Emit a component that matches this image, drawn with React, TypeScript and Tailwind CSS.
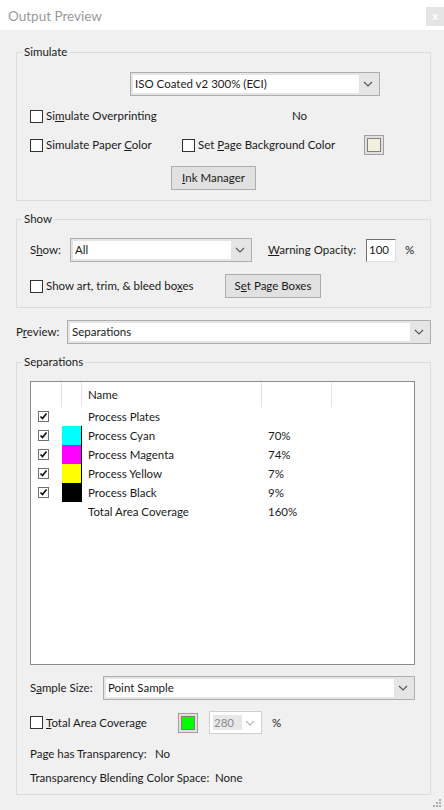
import React from "react";

const font = { fontFamily: 'Lato, "Noto Sans", sans-serif' };

function Chevron({ light }: { light?: boolean }) {
  return (
    <svg width="10" height="6" viewBox="0 0 10 6" className="block">
      <path d="M1 1 L5 5 L9 1" fill="none" stroke={light ? "#b8b8b8" : "#555"} strokeWidth="1.1" />
    </svg>
  );
}

function Select({ value, className }: { value: string; className: string }) {
  return (
    <div className={`flex h-[24px] border border-[#adadad] bg-[#e5e5e5] p-[2px] ${className}`}>
      <div className="flex flex-1 items-center bg-white pl-[2px] text-[#1a1a1a]">{value}</div>
      <div className="flex w-[18px] items-center justify-center">
        <Chevron />
      </div>
    </div>
  );
}

function Check({ className = "" }: { className?: string }) {
  return <div className={`h-[13px] w-[13px] shrink-0 border border-[#333] bg-white ${className}`} />;
}

function SmallCheck() {
  return (
    <div className="flex h-[11px] w-[11px] items-center justify-center border border-[#707070] bg-white">
      <svg width="9" height="9" viewBox="0 0 9 9">
        <path d="M1.5 4.5 L3.5 6.5 L7.5 1.5" fill="none" stroke="#111" strokeWidth="1.7" />
      </svg>
    </div>
  );
}

function Button({ children, className }: { children: React.ReactNode; className: string }) {
  return (
    <div className={`flex h-[24px] items-center justify-center border border-[#adadad] bg-[#e1e1e1] text-[#1a1a1a] ${className}`}>
      {children}
    </div>
  );
}

function Swatch({ color }: { color: string }) {
  return (
    <div className="flex h-[20px] w-[20px] shrink-0 items-center justify-center border border-[#a0a0a0] bg-[#e0e0e0]">
      <div className="h-[14px] w-[14px] border border-[#808080]" style={{ background: color }} />
    </div>
  );
}

const rows = [
  { name: "Process Plates", pct: "", color: "" },
  { name: "Process Cyan", pct: "70%", color: "bg-[#00ffff]" },
  { name: "Process Magenta", pct: "74%", color: "bg-[#ff00ff]" },
  { name: "Process Yellow", pct: "7%", color: "bg-[#ffff00]" },
  { name: "Process Black", pct: "9%", color: "bg-black" },
  { name: "Total Area Coverage", pct: "160%", color: "", noCheck: true },
];

export default function App() {
  return (
    <div className="flex h-[810px] w-[444px] flex-col overflow-hidden whitespace-nowrap bg-[#f0f0f0] text-[11.5px] text-[#1a1a1a]" style={font}>
      <div className="flex h-[30px] shrink-0 items-start justify-between bg-white">
        <div className="mt-[6px] pl-[8px] text-[13.5px] text-[#999]">Output Preview</div>
        <div className="mt-[7px] flex h-[19px] w-[18px] items-center justify-center bg-[#e5e5e5] text-[11px] font-bold text-white">x</div>
      </div>

      <div className="flex flex-col pl-[16px] pr-[13px]">
        {/* Simulate */}
        <fieldset className="mt-[14px] flex flex-col border border-[#dcdcdc] pb-[10px] pl-[13px] pr-[13px]">
          <legend className="-ml-[8px] px-[2px] leading-[16px]">Simulate</legend>
          <Select value="ISO Coated v2 300% (ECI)" className="ml-[100px] mt-[12px] w-[250px]" />
          <div className="mt-[10px] flex h-[20px] items-center">
            <Check />
            <span className="ml-[3px] w-[246px]">
              Si<u>m</u>ulate Overprinting
            </span>
            <span>No</span>
          </div>
          <div className="mt-[9px] flex h-[20px] items-center">
            <Check />
            <span className="ml-[3px] w-[136px]">
              Simulate Paper <u>C</u>olor
            </span>
            <Check />
            <span className="ml-[3px] w-[166px]">
              Set <u>P</u>age Background Color
            </span>
            <Swatch color="#f0f0dc" />
          </div>
          <Button className="ml-[141px] mt-[11px] w-[85px]">
            <span>
              <u>I</u>nk Manager
            </span>
          </Button>
        </fieldset>

        {/* Show */}
        <fieldset className="mt-[10px] flex flex-col border border-[#dcdcdc] pb-[9px] pl-[13px] pr-[13px]">
          <legend className="-ml-[8px] px-[2px] leading-[16px]">Show</legend>
          <div className="mt-[11px] flex h-[24px] items-center">
            <span className="w-[40px]">
              S<u>h</u>ow:
            </span>
            <Select value="All" className="w-[182px]" />
            <span className="ml-[16px] w-[98px]">
              <u>W</u>arning Opacity:
            </span>
            <div className="flex h-[23px] w-[30px] items-center border border-[#e0e0e0] border-l-[#707070] border-t-[#707070] bg-white pl-[2px]">
              100
            </div>
            <span className="ml-[9px]">%</span>
          </div>
          <div className="mt-[12px] flex h-[24px] items-center">
            <Check />
            <span className="ml-[3px] w-[179px]">
              Show art, trim, &amp; bleed bo<u>x</u>es
            </span>
            <Button className="w-[96px]">
              <span>
                S<u>e</u>t Page Boxes
              </span>
            </Button>
          </div>
        </fieldset>

        {/* Preview */}
        <div className="mt-[12px] flex h-[24px] items-center">
          <span className="w-[51px]">
            P<u>r</u>eview:
          </span>
          <Select value="Separations" className="flex-1" />
        </div>

        {/* Separations */}
        <fieldset className="mt-[10px] flex flex-col border border-[#dcdcdc] pb-[8px] pl-[13px] pr-[15px]">
          <legend className="-ml-[8px] px-[2px] leading-[16px]">Separations</legend>
          <div className="mt-[11px] flex h-[284px] flex-col border border-[#8c8c8c] bg-white">
            <div className="flex h-[25px] shrink-0">
              <div className="w-[31px] border-r border-[#e5e5e5]" />
              <div className="w-[20px] border-r border-[#e5e5e5]" />
              <div className="flex w-[180px] items-center border-r border-[#e5e5e5] pl-[6px]">Name</div>
              <div className="w-[70px] border-r border-[#e5e5e5]" />
            </div>
            {rows.map((r) => (
              <div key={r.name} className="flex h-[19px] shrink-0">
                <div className="flex w-[31px] items-center pl-[7px]">{!r.noCheck && <SmallCheck />}</div>
                <div className={`w-[20px] ${r.color ? `${r.color} border-r border-black` : ""}`} />
                <div className="flex w-[180px] items-center pl-[6px]">{r.name}</div>
                <div className="flex w-[70px] items-center pl-[6px]">{r.pct}</div>
              </div>
            ))}
          </div>

          <div className="mt-[11px] flex h-[24px] items-center">
            <span className="w-[73px]">
              S<u>a</u>mple Size:
            </span>
            <Select value="Point Sample" className="flex-1" />
          </div>

          <div className="mt-[11px] flex h-[23px] items-center">
            <Check />
            <span className="ml-[3px] w-[132px]">
              <u>T</u>otal Area Coverage
            </span>
            <Swatch color="#00ff00" />
            <div className="ml-[11px] flex h-[23px] w-[53px] items-center border border-[#cfcfcf] bg-white p-[3px]">
              <div className="flex h-full w-[29px] items-center bg-[#e8e8e8] pl-[1px] text-[#8c8c8c]">280</div>
              <div className="flex flex-1 items-center justify-center">
                <Chevron light />
              </div>
            </div>
            <span className="ml-[10px]">%</span>
          </div>

          <div className="mt-[12px] flex h-[16px] items-center">
            <span className="w-[125px]">Page has Transparency:</span>
            <span>No</span>
          </div>
          <div className="mt-[8px] flex h-[16px] items-center">
            <span className="w-[185px]">Transparency Blending Color Space:</span>
            <span>None</span>
          </div>
        </fieldset>
      </div>

      <div className="flex flex-1 items-end justify-end pb-[2px] pr-[2px]">
        <svg width="9" height="9" viewBox="0 0 9 9">
          <rect x="6" y="0" width="2" height="2" fill="#b0b0b0" />
          <rect x="3" y="3" width="2" height="2" fill="#b0b0b0" />
          <rect x="6" y="3" width="2" height="2" fill="#b0b0b0" />
          <rect x="0" y="6" width="2" height="2" fill="#b0b0b0" />
          <rect x="3" y="6" width="2" height="2" fill="#b0b0b0" />
          <rect x="6" y="6" width="2" height="2" fill="#b0b0b0" />
        </svg>
      </div>
    </div>
  );
}
